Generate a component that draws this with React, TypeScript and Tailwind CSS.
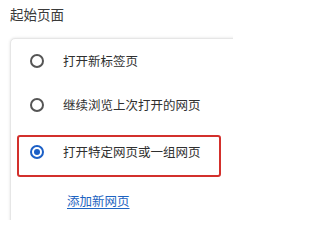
import React from "react";

function Radio({ checked }: { checked?: boolean }) {
  if (checked) {
    return (
      <div className="w-[14px] h-[14px] rounded-full border-2 border-[#1b5fc6] flex items-center justify-center shrink-0">
        <div className="w-[6px] h-[6px] rounded-full bg-[#1b5fc6]" />
      </div>
    );
  }
  return <div className="w-[14px] h-[14px] rounded-full border-2 border-[#555555] shrink-0" />;
}

export default function App() {
  return (
    <div className="w-[233px] h-[220px] overflow-hidden bg-white pl-[10px] pt-[4px] font-['Noto_Sans_CJK_SC','Noto_Sans',sans-serif] text-[#2f2f2f]">
      <div className="h-[20px] leading-[20px] text-[13.5px] text-[#3a3a3a]">起始页面</div>
      <div className="relative mt-[14px] w-[240px] h-[200px] bg-white rounded-[5px] border border-[#e6e6e6] shadow-[0_0_3px_rgba(0,0,0,0.12)]">
        <div className="flex flex-col text-[12.5px]">
          <div className="h-[44px] flex items-center pl-[19px] gap-[19px]">
            <Radio />
            <span>打开新标签页</span>
          </div>
          <div className="h-[44px] flex items-center pl-[19px] gap-[19px]">
            <Radio />
            <span>继续浏览上次打开的网页</span>
          </div>
          <div className="h-[50px] flex items-center pl-[19px] gap-[19px]">
            <Radio checked />
            <span>打开特定网页或一组网页</span>
          </div>
          <div className="h-[48px] flex items-center pl-[56px]">
            <span className="text-[#1d63c1] underline underline-offset-[2px]">添加新网页</span>
          </div>
        </div>
        <div className="absolute left-[6px] top-[96px] w-[204px] h-[42px] border-2 border-[#d3302c] rounded-[3px]" />
      </div>
    </div>
  );
}
